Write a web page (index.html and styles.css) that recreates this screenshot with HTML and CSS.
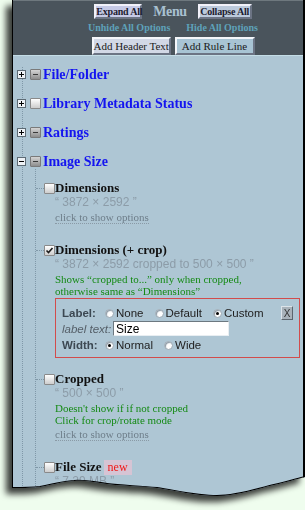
FILE: index.html
```html
<!DOCTYPE html>
<html>

<head>
  <title>Menu</title>
  <meta charset="utf-8">
  <link rel="stylesheet" href="styles.css">
</head>

<body>

<div class="sheet">
  <div class="panel">

    <div class="head">
      <div class="head-top">
        <button class="btn-s expand">Expand All</button>
        <span class="menu-title">Menu</span>
        <button class="btn-s collapse">Collapse All</button>
      </div>
      <div class="head-links">
        <a>Unhide All Options</a>
        <a>Hide All Options</a>
      </div>
      <div class="head-add">
        <button class="btn-l add-text">Add Header Text</button>
        <button class="btn-l add-rule">Add Rule Line</button>
      </div>
    </div>

    <div class="tree">

      <div class="node">
        <div class="node-row">
          <svg class="tog" width="9" height="9"><rect x="0.5" y="0.5" width="8" height="8" fill="#eef2f6" stroke="#5c6a74"/><path d="M2 4.5H7M4.5 2V7" stroke="#000"/></svg>
          <span class="cb part"></span>
          <span class="grp">File/Folder</span>
        </div>
      </div>

      <div class="node">
        <div class="node-row">
          <svg class="tog" width="9" height="9"><rect x="0.5" y="0.5" width="8" height="8" fill="#eef2f6" stroke="#5c6a74"/><path d="M2 4.5H7M4.5 2V7" stroke="#000"/></svg>
          <span class="cb"></span>
          <span class="grp">Library Metadata Status</span>
        </div>
      </div>

      <div class="node">
        <div class="node-row">
          <svg class="tog" width="9" height="9"><rect x="0.5" y="0.5" width="8" height="8" fill="#eef2f6" stroke="#5c6a74"/><path d="M2 4.5H7M4.5 2V7" stroke="#000"/></svg>
          <span class="cb part"></span>
          <span class="grp">Ratings</span>
        </div>
      </div>

      <div class="node">
        <div class="node-row">
          <svg class="tog" width="9" height="9"><rect x="0.5" y="0.5" width="8" height="8" fill="#eef2f6" stroke="#5c6a74"/><path d="M2 4.5H7" stroke="#000"/></svg>
          <span class="cb part"></span>
          <span class="grp">Image Size</span>
        </div>

        <div class="kids">

          <div class="kid">
            <div class="kid-row">
              <span class="branch"></span>
              <span class="cb"></span>
              <span class="kid-title">Dimensions</span>
            </div>
            <div class="kid-body">
              <div class="sample">“ 3872 × 2592 ”</div>
              <div class="show-line"><span class="show">click to show options</span></div>
            </div>
          </div>

          <div class="kid">
            <div class="kid-row">
              <span class="branch"></span>
              <span class="cb on"><svg width="9" height="9"><path d="M1.5 4.5L3.5 6.5L7.5 2" fill="none" stroke="#1a1a1a" stroke-width="1.6"/></svg></span>
              <span class="kid-title">Dimensions (+ crop)</span>
            </div>
            <div class="kid-body">
              <div class="sample">“ 3872 × 2592 cropped to 500 × 500 ”</div>
              <div class="notes">
                <div class="note">Shows “cropped to...” only when cropped,</div>
                <div class="note">otherwise same as “Dimensions”</div>
              </div>
              <div class="opts">
                <div class="opt-row">
                  <span class="opt-label">Label:</span>
                  <span class="choice"><span class="radio"></span>None</span>
                  <span class="choice"><span class="radio"></span>Default</span>
                  <span class="choice"><span class="radio on"></span>Custom</span>
                  <button class="x-btn">X</button>
                </div>
                <div class="opt-row text-row">
                  <span class="opt-hint">label text:</span>
                  <input class="opt-input" type="text" value="Size">
                </div>
                <div class="opt-row width-row">
                  <span class="opt-label">Width:</span>
                  <span class="choice"><span class="radio on"></span>Normal</span>
                  <span class="choice"><span class="radio"></span>Wide</span>
                </div>
              </div>
            </div>
          </div>

          <div class="kid">
            <div class="kid-row">
              <span class="branch"></span>
              <span class="cb"></span>
              <span class="kid-title">Cropped</span>
            </div>
            <div class="kid-body">
              <div class="sample">“ 500 × 500 ”</div>
              <div class="notes">
                <div class="note">Doesn't show if if not cropped</div>
                <div class="note">Click for crop/rotate mode</div>
              </div>
              <div class="show-line"><span class="show">click to show options</span></div>
            </div>
          </div>

          <div class="kid">
            <div class="kid-row">
              <span class="branch"></span>
              <span class="cb"></span>
              <span class="kid-title">File Size</span>
              <span class="badge">new</span>
            </div>
            <div class="kid-body">
              <div class="sample">“ 7.29 MB ”</div>
            </div>
          </div>

        </div>
      </div>

    </div>

    <svg class="torn" width="293" height="510"><path d="M293 477C285 479 275 482 262 485C245 489 225 496 205 496C185 496 165 491 145 488C125 486 110 486 95 484C80 482 72 480 62 481C48 482 40 485 28 487C18 488 8 488 0 488" fill="none" stroke="#000" stroke-width="2"/></svg>
  </div>
</div>

</body>

</html>
```

FILE: styles.css
```css
body {
  margin: 0;
  height: 510px;
  overflow: hidden;
  background-color: #effdee;
  font-family: "Liberation Serif", serif;
}

.sheet {
  margin-left: 12px;
  width: 293px;
  filter: drop-shadow(-6px 6px 3px rgba(0, 0, 0, 0.75));
}

.panel {
  position: relative;
  height: 510px;
  box-sizing: border-box;
  background-color: #aec6d4;
  border-left: 1px solid #000;
  border-right: 2px solid #000;
  clip-path: path("M0 0H293V477C285 479 275 482 262 485C245 489 225 496 205 496C185 496 165 491 145 488C125 486 110 486 95 484C80 482 72 480 62 481C48 482 40 485 28 487C18 488 8 488 0 488Z");
}

.torn {
  position: absolute;
  left: -1px;
  top: 0;
  pointer-events: none;
}

/* header */
.head {
  height: 56px;
  box-sizing: border-box;
  padding: 4px 0 0 30px;
  background-color: #4a545c;
  border-top: 1px solid #6e787e;
  border-bottom: 1px solid #c4dde6;
  display: flex;
  flex-direction: column;
  align-items: center;
}

.head button {
  white-space: nowrap;
  overflow: visible;
}

.head-top {
  display: flex;
  align-items: center;
  gap: 11px;
  height: 15px;
  margin-top: -1px;
}

.btn-s {
  height: 15px;
  padding: 0;
  font: bold 10px "Liberation Serif", serif;
  letter-spacing: -0.2px;
  color: #1c1c30;
  background-color: #c6cae6;
  border: 2px solid;
  border-color: #f2f2fa #6c7484 #6c7484 #f2f2fa;
}

.expand {
  width: 48px;
}

.collapse {
  width: 54px;
  background-color: #bccadc;
}

.menu-title {
  font-weight: bold;
  font-size: 14px;
  letter-spacing: -0.4px;
  color: #a8c0d0;
}

.head-links {
  display: flex;
  gap: 16px;
  height: 12px;
  margin-top: 3px;
  font-weight: bold;
  font-size: 10px;
  line-height: 12px;
  color: #5ea2ba;
  white-space: nowrap;
}

.head-add {
  display: flex;
  gap: 4px;
  margin-top: 3px;
}

.btn-l {
  height: 18px;
  padding: 0;
  font: 11px "Liberation Serif", serif;
  color: #1a1a1a;
  background-color: #d2d8e6;
  border: 2px solid;
  border-color: #f4f6fa #6c7484 #6c7484 #f4f6fa;
}

.add-text {
  width: 79px;
}

.add-rule {
  width: 80px;
  background-color: #a8c4d4;
}

/* tree */
.tree {
  margin: 11px 0 0 9px;
  border-left: 1px dotted #8098a8;
}

.node {
  margin-bottom: 14px;
}

.node-row {
  display: flex;
  align-items: center;
  height: 15px;
}

.tog {
  margin-left: -6px;
  flex: none;
}

.cb {
  flex: none;
  width: 11px;
  height: 11px;
  box-sizing: border-box;
  border: 1px solid #8a8a8a;
  border-radius: 1px;
  background: linear-gradient(#ffffff, #cdcdcd);
  display: flex;
  align-items: center;
  justify-content: center;
}

.cb.part {
  background: linear-gradient(#d4d4d4, #8e8e8e);
  border-color: #7a7a7a;
}

.cb.part:after {
  content: "";
  width: 5px;
  height: 1px;
  background-color: #3a3a3a;
}

.node-row .cb {
  margin-left: 4px;
}

.grp {
  margin-left: 2px;
  font-weight: bold;
  font-size: 14px;
  color: #1414f0;
}

.kids {
  margin-left: 12px;
  padding: 12px 0 30px;
  border-left: 1px dotted #8098a8;
}

.kid {
  margin-bottom: 14px;
}

.kid-row {
  display: flex;
  align-items: center;
  height: 14px;
}

.branch {
  width: 8px;
  border-top: 1px dotted #8098a8;
}

.kid-title {
  font-weight: bold;
  font-size: 13px;
  color: #111;
}

.badge {
  margin-left: 2px;
  padding: 0 4px;
  height: 15px;
  line-height: 15px;
  font-size: 12px;
  color: #f01818;
  background-color: #d6c4d4;
}

.kid-body {
  padding-left: 19px;
}

.sample {
  font: 12px "Liberation Sans", sans-serif;
  line-height: 14px;
  color: #8c9ca8;
}

.show-line {
  line-height: 14px;
  padding-bottom: 5px;
}

.show {
  font-size: 11px;
  color: #6e7e8a;
  border-bottom: 1px dotted #8a9aa6;
}

.notes {
  margin-top: 2px;
}

.note {
  font-size: 11px;
  line-height: 12px;
  color: #158a15;
}

/* options box */
.opts {
  width: 245px;
  box-sizing: border-box;
  margin-top: 1px;
  padding: 7px 6px 5px;
  border: 1px solid #d24c4c;
  font: 11.5px "Liberation Sans", sans-serif;
  color: #222;
}

.opt-row {
  display: flex;
  align-items: center;
  height: 14px;
}

.text-row {
  height: 15px;
  margin-top: 1px;
}

.width-row {
  margin-top: 2px;
}

.opt-label {
  width: 43px;
  font-weight: bold;
  color: #3c4852;
}

.opt-hint {
  width: 51px;
  font-style: italic;
  color: #555f68;
}

.choice {
  display: flex;
  align-items: center;
  margin-right: 11px;
}

.radio {
  width: 9px;
  height: 9px;
  box-sizing: border-box;
  margin-right: 2px;
  border-radius: 50%;
  background-color: #fff;
  border: 1px solid #98a6b0;
  box-shadow: inset 1px 1px 1px #8a98a4;
  display: flex;
  align-items: center;
  justify-content: center;
}

.radio.on:after {
  content: "";
  width: 3px;
  height: 3px;
  border-radius: 50%;
  background-color: #000;
}

.opt-input {
  width: 116px;
  height: 15px;
  box-sizing: border-box;
  padding: 0 2px;
  font: 12px "Liberation Sans", sans-serif;
  color: #000;
  background-color: #fff;
  border: 1px solid;
  border-color: #6c7880 #e8eef2 #e8eef2 #6c7880;
  outline: none;
}

.x-btn {
  margin-left: auto;
  width: 12px;
  height: 14px;
  padding: 0;
  font: 10px "Liberation Sans", sans-serif;
  color: #333;
  background-color: #a8b2ba;
  border: 1px solid;
  border-color: #dce4ea #5c666e #5c666e #dce4ea;
}
```
